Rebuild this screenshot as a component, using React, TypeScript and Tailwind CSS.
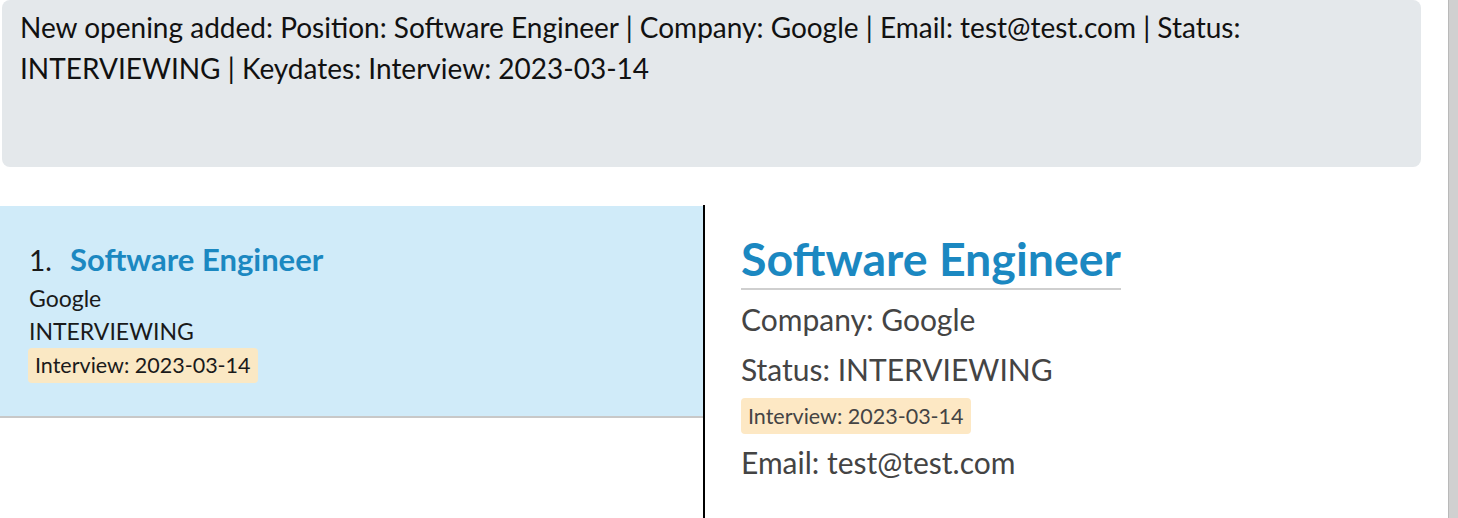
import React from 'react'

const font = { fontFamily: 'Lato, "Noto Sans", sans-serif' }

function ResultBox() {
  return (
    <div className="h-[167px] rounded-[8px] bg-[#e4e8eb] px-[18px] pt-[7px] text-[28px] leading-[41px] text-[#111]">
      New opening added: Position: Software Engineer | Company: Google | Email: test@test.com | Status:
      INTERVIEWING | Keydates: Interview: 2023-03-14
    </div>
  )
}

function OpeningCard() {
  return (
    <div className="flex h-[212px] flex-col items-start border-b-2 border-[#c8c8c8] bg-[#d0ebf9] pl-[28px] pt-[36px] text-[#1a1a1a]">
      <div className="flex items-baseline pl-[1px] text-[31px] leading-[34px]">
        <span className="w-[41px] text-[28px]">1.</span>
        <span className="font-bold text-[#1b88c1]">Software Engineer</span>
      </div>
      <div className="mt-[5px] pl-[1px] text-[23px] leading-[33px]">Google</div>
      <div className="pl-[1px] text-[23px] leading-[33px]">INTERVIEWING</div>
      <span className="rounded-[4px] bg-[#fae8c4] px-[7px] text-[21.5px] leading-[35px]">
        Interview: 2023-03-14
      </span>
    </div>
  )
}

function OpeningDetail() {
  return (
    <div className="flex flex-col items-start pl-[36px] pt-[26px] text-[#444]">
      <h1 className="border-b-2 border-[#cfcfcf] pb-[3px] text-[46.5px] leading-[54px] font-bold text-[#1b88c1]">
        Software Engineer
      </h1>
      <div className="mt-[4px] text-[30px] leading-[50px]">Company: Google</div>
      <div className="text-[30px] leading-[50px]">Status: INTERVIEWING</div>
      <span className="mt-[4px] rounded-[4px] bg-[#fde8c4] px-[7px] text-[21.5px] leading-[36px]">
        Interview: 2023-03-14
      </span>
      <div className="text-[30px] leading-[56px]">Email: test@test.com</div>
    </div>
  )
}

export default function App() {
  return (
    <div className="flex h-[518px] w-[1458px] overflow-hidden bg-white" style={font}>
      <div className="flex w-[1448px] flex-col">
        <div className="pl-[2px] pr-[27px]">
          <ResultBox />
        </div>
        <div className="mt-[38px] flex flex-1">
          <div className="w-[703px] pt-[1px]">
            <OpeningCard />
          </div>
          <div className="w-[2px] bg-black" />
          <OpeningDetail />
        </div>
      </div>
      <div className="w-[10px] border-l border-[#b9b9b9] bg-[#d0d0d0]" />
    </div>
  )
}
